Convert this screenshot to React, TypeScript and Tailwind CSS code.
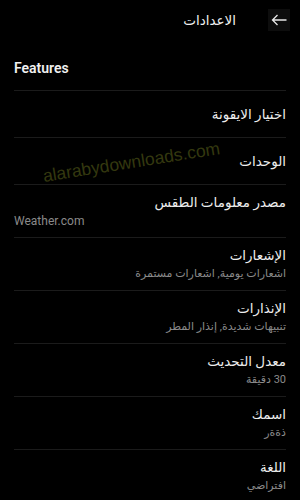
import React from 'react'

type Row = { title: string; sub?: string; subLtr?: boolean }

const rows: Row[] = [
  { title: 'اختيار الايقونة' },
  { title: 'الوحدات' },
  { title: 'مصدر معلومات الطقس', sub: 'Weather.com', subLtr: true },
  { title: 'الإشعارات', sub: 'اشعارات يومية, اشعارات مستمرة' },
  { title: 'الإنذارات', sub: 'تنبيهات شديدة, إنذار المطر' },
  { title: 'معدل التحديث', sub: '30 دقيقة' },
  { title: 'اسمك', sub: 'ذةةر' },
  { title: 'اللغة', sub: 'افتراضي' },
]

function SettingRow({ row, last }: { row: Row; last: boolean }) {
  const border = last ? '' : 'border-b border-[#1b1b1b]'
  if (!row.sub) {
    return (
      <div className={`flex h-[47px] items-center ${border}`}>
        <span className="text-[13.5px] leading-[18px] text-[#ededed]">{row.title}</span>
      </div>
    )
  }
  return (
    <div className={`flex flex-col py-[8px] ${border}`}>
      <span className="text-[13.5px] leading-[18px] text-[#ededed]">{row.title}</span>
      <span
        dir={row.subLtr ? 'ltr' : 'rtl'}
        className={`mt-[2px] leading-[16px] text-[#8a8a8a] ${row.subLtr ? 'text-left text-[12px]' : 'text-[11px]'}`}
      >
        {row.sub}
      </span>
    </div>
  )
}

export default function App() {
  return (
    <div
      className="relative h-[500px] w-[300px] overflow-hidden bg-black"
      style={{ fontFamily: 'Roboto, "DejaVu Sans", sans-serif' }}
    >
      {/* header */}
      <div dir="rtl" className="flex h-[40px] items-center pr-[10px]">
        <div className="flex h-[22px] w-[22px] items-center justify-center bg-[#0d0d0d]">
          <svg width="16" height="12" viewBox="0 0 16 12" fill="none" stroke="#e8e8e8" strokeWidth="1.3">
            <path d="M1.5 6h14M6.5 1L1.5 6l5 5" />
          </svg>
        </div>
        <h1 className="mr-[32px] text-[13.5px] font-medium text-[#f0f0f0]">الاعدادات</h1>
      </div>

      <div className="px-[14px]">
        <div className="border-b border-[#1b1b1b] pt-[19px] pb-[13px]">
          <h2 className="text-[14px] font-semibold leading-[18px] text-[#f0f0f0]">Features</h2>
        </div>
        <div dir="rtl">
          {rows.map((r, i) => (
            <SettingRow key={r.title} row={r} last={i === rows.length - 1} />
          ))}
        </div>
      </div>

      {/* watermark */}
      <div
        className="pointer-events-none absolute left-[43px] top-[163px] origin-left -rotate-[9deg] text-[17.5px] text-[#34380f]"
        style={{ fontFamily: '"Liberation Sans", Arial, sans-serif' }}
      >
        alarabydownloads.com
      </div>
    </div>
  )
}
